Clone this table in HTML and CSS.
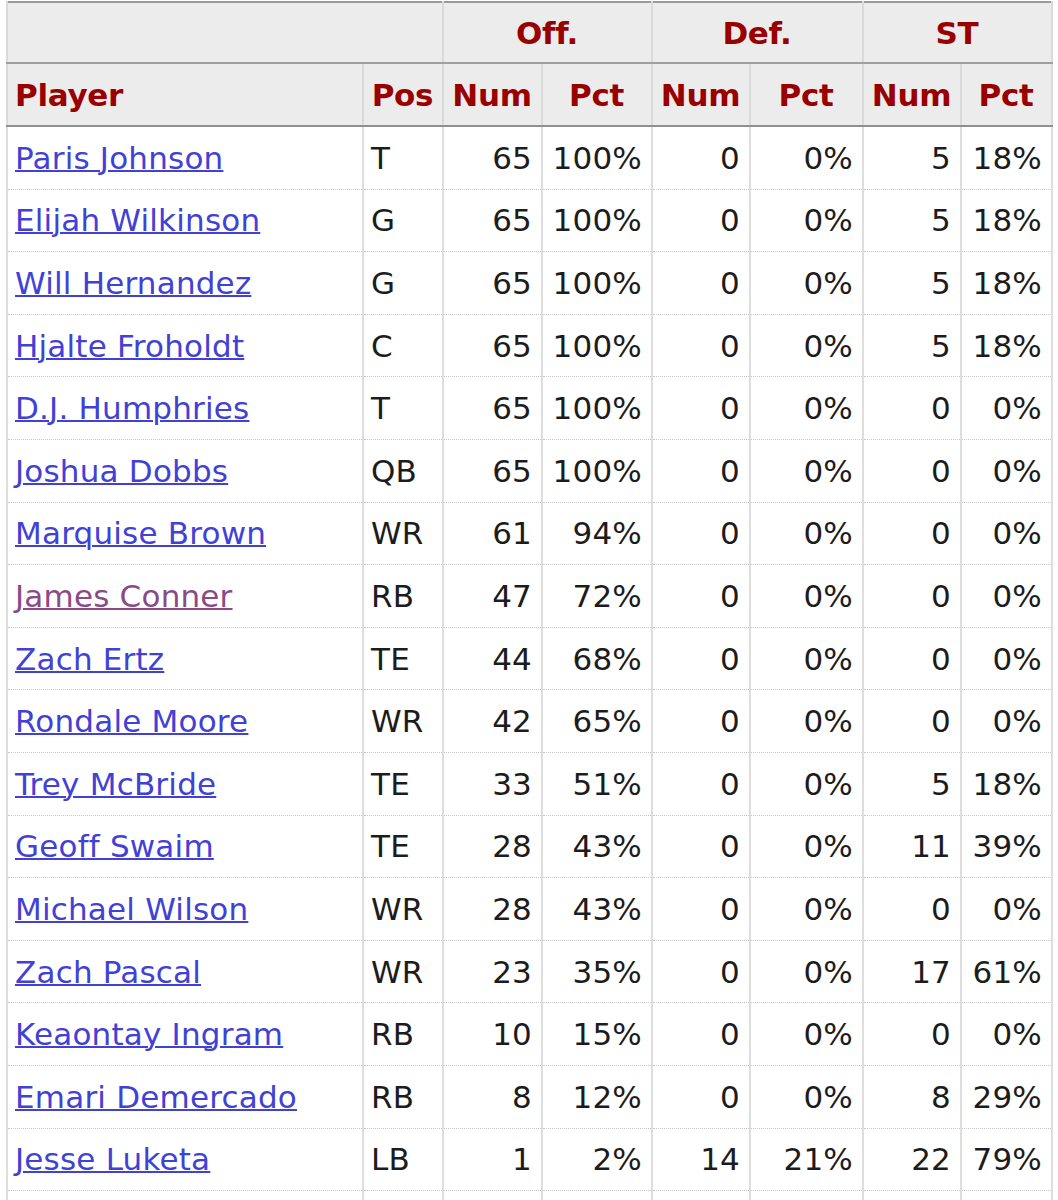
FILE: index.html
```html
<!DOCTYPE html>
<html lang="en">
<head>
<meta charset="utf-8">
<title>Snap Counts</title>
<link rel="stylesheet" href="styles.css">
</head>
<body>
<table class="stats">
  <colgroup>
    <col class="c-player">
    <col class="c-pos">
    <col class="c-num1">
    <col class="c-pct1">
    <col class="c-num">
    <col class="c-pct2">
    <col class="c-num">
    <col class="c-pct3">
  </colgroup>
  <thead>
    <tr class="over">
      <th colspan="2"></th>
      <th colspan="2">Off.</th>
      <th colspan="2">Def.</th>
      <th colspan="2">ST</th>
    </tr>
    <tr class="head">
      <th class="left">Player</th>
      <th>Pos</th>
      <th>Num</th>
      <th>Pct</th>
      <th>Num</th>
      <th>Pct</th>
      <th>Num</th>
      <th>Pct</th>
    </tr>
  </thead>
  <tbody>
    <tr><td><a href="#">Paris Johnson</a></td><td>T</td><td class="r">65</td><td class="r">100%</td><td class="r">0</td><td class="r">0%</td><td class="r">5</td><td class="r">18%</td></tr>
    <tr><td><a href="#">Elijah Wilkinson</a></td><td>G</td><td class="r">65</td><td class="r">100%</td><td class="r">0</td><td class="r">0%</td><td class="r">5</td><td class="r">18%</td></tr>
    <tr><td><a href="#">Will Hernandez</a></td><td>G</td><td class="r">65</td><td class="r">100%</td><td class="r">0</td><td class="r">0%</td><td class="r">5</td><td class="r">18%</td></tr>
    <tr><td><a href="#">Hjalte Froholdt</a></td><td>C</td><td class="r">65</td><td class="r">100%</td><td class="r">0</td><td class="r">0%</td><td class="r">5</td><td class="r">18%</td></tr>
    <tr><td><a href="#">D.J. Humphries</a></td><td>T</td><td class="r">65</td><td class="r">100%</td><td class="r">0</td><td class="r">0%</td><td class="r">0</td><td class="r">0%</td></tr>
    <tr><td><a href="#">Joshua Dobbs</a></td><td>QB</td><td class="r">65</td><td class="r">100%</td><td class="r">0</td><td class="r">0%</td><td class="r">0</td><td class="r">0%</td></tr>
    <tr><td><a href="#">Marquise Brown</a></td><td>WR</td><td class="r">61</td><td class="r">94%</td><td class="r">0</td><td class="r">0%</td><td class="r">0</td><td class="r">0%</td></tr>
    <tr><td><a href="#" class="visited">James Conner</a></td><td>RB</td><td class="r">47</td><td class="r">72%</td><td class="r">0</td><td class="r">0%</td><td class="r">0</td><td class="r">0%</td></tr>
    <tr><td><a href="#">Zach Ertz</a></td><td>TE</td><td class="r">44</td><td class="r">68%</td><td class="r">0</td><td class="r">0%</td><td class="r">0</td><td class="r">0%</td></tr>
    <tr><td><a href="#">Rondale Moore</a></td><td>WR</td><td class="r">42</td><td class="r">65%</td><td class="r">0</td><td class="r">0%</td><td class="r">0</td><td class="r">0%</td></tr>
    <tr><td><a href="#">Trey McBride</a></td><td>TE</td><td class="r">33</td><td class="r">51%</td><td class="r">0</td><td class="r">0%</td><td class="r">5</td><td class="r">18%</td></tr>
    <tr><td><a href="#">Geoff Swaim</a></td><td>TE</td><td class="r">28</td><td class="r">43%</td><td class="r">0</td><td class="r">0%</td><td class="r">11</td><td class="r">39%</td></tr>
    <tr><td><a href="#">Michael Wilson</a></td><td>WR</td><td class="r">28</td><td class="r">43%</td><td class="r">0</td><td class="r">0%</td><td class="r">0</td><td class="r">0%</td></tr>
    <tr><td><a href="#">Zach Pascal</a></td><td>WR</td><td class="r">23</td><td class="r">35%</td><td class="r">0</td><td class="r">0%</td><td class="r">17</td><td class="r">61%</td></tr>
    <tr><td><a href="#">Keaontay Ingram</a></td><td>RB</td><td class="r">10</td><td class="r">15%</td><td class="r">0</td><td class="r">0%</td><td class="r">0</td><td class="r">0%</td></tr>
    <tr><td><a href="#">Emari Demercado</a></td><td>RB</td><td class="r">8</td><td class="r">12%</td><td class="r">0</td><td class="r">0%</td><td class="r">8</td><td class="r">29%</td></tr>
    <tr><td><a href="#">Jesse Luketa</a></td><td>LB</td><td class="r">1</td><td class="r">2%</td><td class="r">14</td><td class="r">21%</td><td class="r">22</td><td class="r">79%</td></tr>
    <tr class="filler"><td></td><td></td><td></td><td></td><td></td><td></td><td></td><td></td></tr>
  </tbody>
</table>
</body>
</html>
```

FILE: styles.css
```css
html, body {
  margin: 0;
  padding: 0;
  background: #ffffff;
}

body {
  font-family: "DejaVu Sans", Verdana, sans-serif;
  font-size: 31px;
  color: #1c1c1c;
}

.stats {
  border-collapse: collapse;
  table-layout: fixed;
  width: 1045px;
  margin: 1px 0 0 6px;
  border-top: 2px solid #9a9a9a;
  border-left: 2px solid #9a9a9a;
  border-right: 2px solid #9a9a9a;
}

.c-player { width: 356px; }
.c-pos { width: 80px; }
.c-num1 { width: 99px; }
.c-pct1 { width: 110px; }
.c-num { width: 98px; }
.c-pct2 { width: 113px; }
.c-pct3 { width: 91px; }

.stats th {
  background: #ececec;
  color: #990000;
  font-weight: bold;
  text-align: center;
  padding: 0 8px 0 7px;
  border-left: 2px solid #dadada;
  border-right: 2px solid #dadada;
  white-space: nowrap;
  letter-spacing: -0.3px;
}

.stats tr.over th {
  height: 59px;
  border-bottom: 2px solid #a0a0a0;
}

.stats tr.head th {
  height: 61px;
  border-bottom: 2px solid #909090;
}

.stats th.left {
  text-align: left;
}

.stats td {
  height: 61.6px;
  padding: 0 9px 0 7px;
  border-left: 2px solid #dedede;
  border-right: 2px solid #dedede;
  border-bottom: 1px dotted #c8c8c8;
  white-space: nowrap;
  letter-spacing: 0.2px;
}

.stats td.r {
  text-align: right;
}

.stats a {
  color: #4141d6;
  text-decoration: underline;
  text-decoration-thickness: 2px;
}

.stats a.visited {
  color: #8b4a85;
}
```
